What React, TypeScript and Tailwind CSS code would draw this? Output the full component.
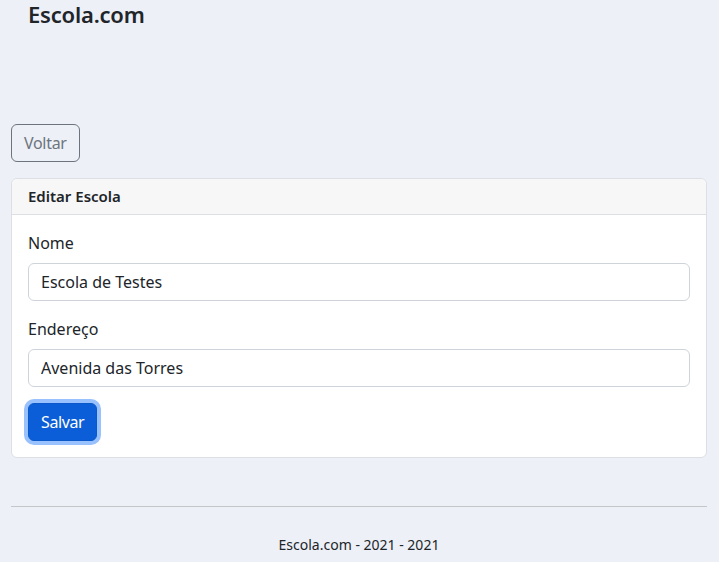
export default function App() {
    return (
        <div className="min-h-screen bg-[#edf0f7] text-[#212529] font-['Noto_Sans','Open_Sans',sans-serif]">
            <header className="px-[28px] h-[30px]">
                <span className="text-[22px] leading-[28px] font-semibold tracking-[-0.2px]">Escola.com</span>
            </header>

            <main className="px-[11px] pr-[12px] pt-[94px]">
                <button className="h-[38px] px-3 border border-[#6c757d] rounded-md text-[#6c757d] text-[16px] leading-[24px] tracking-[-0.3px]">
                    Voltar
                </button>

                <div className="mt-[16px] bg-white border border-[#dcdfe3] rounded-md">
                    <div className="h-[36px] px-4 flex items-center bg-[#f7f7f7] border-b border-[#dcdfe3] rounded-t-md">
                        <span className="text-[15px] font-semibold">Editar Escola</span>
                    </div>
                    <form className="p-4" onSubmit={(e) => e.preventDefault()}>
                        <label className="block mb-2 text-[16px] leading-[24px]">Nome</label>
                        <input
                            defaultValue="Escola de Testes"
                            className="block w-full h-[38px] px-3 border border-[#ced4da] rounded-md text-[16px] outline-none"
                        />
                        <label className="block mt-4 mb-2 text-[16px] leading-[24px]">Endereço</label>
                        <input
                            defaultValue="Avenida das Torres"
                            className="block w-full h-[38px] px-3 border border-[#ced4da] rounded-md text-[16px] outline-none"
                        />
                        <button
                            type="submit"
                            className="mt-4 h-[38px] px-3 bg-[#0b5ed7] border border-[#0a58ca] rounded-md text-white text-[16px] leading-[24px] tracking-[-0.4px] shadow-[0_0_0_4px_#98c1fe]"
                        >
                            Salvar
                        </button>
                    </form>
                </div>

                <hr className="mt-[48px] border-t border-[#c4c6ca]" />

                <footer className="text-center text-[14px] leading-[20px] pt-[28px]">
                    Escola.com - 2021 - 2021
                </footer>
            </main>
        </div>
    )
}
